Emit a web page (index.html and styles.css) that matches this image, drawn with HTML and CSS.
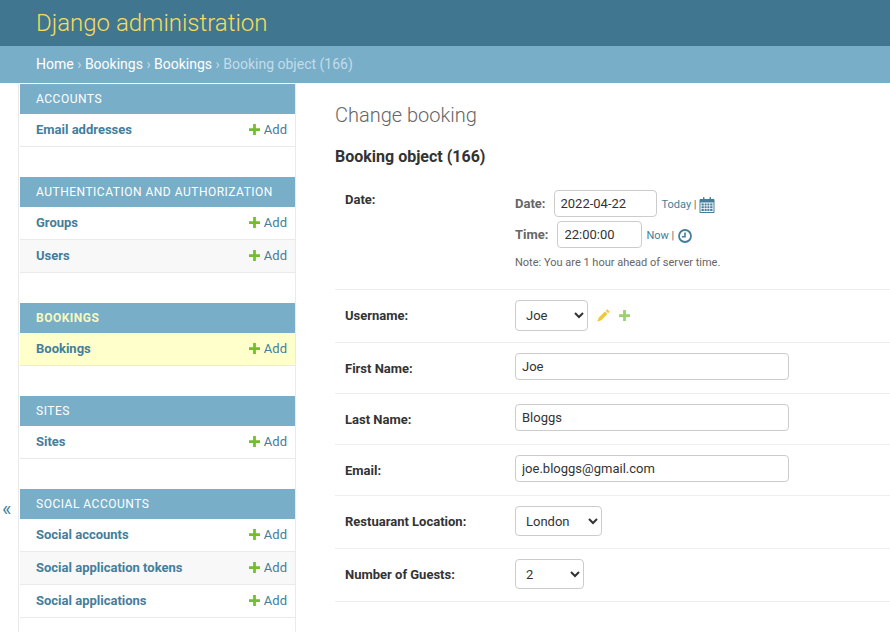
FILE: index.html
```html
<!DOCTYPE html>
<html>
<head>
    <title>Change booking | Django site admin</title>
    <link rel="stylesheet" href="styles.css">
</head>
<body>
    <div id="header"><span id="branding">Django administration</span></div>
    <div class="breadcrumbs">
        <a href="#">Home</a> <span class="sep">›</span> <a href="#">Bookings</a> <span class="sep">›</span> <a href="#">Bookings</a> <span class="sep">›</span> Booking object (166)
    </div>
    <div class="main">
        <div class="toggle">«</div>
        <div class="sidebar">
            <div class="module">
                <div class="caption">Accounts</div>
                <div class="row"><a class="model" href="#">Email addresses</a><a class="add" href="#"><svg class="plus" viewBox="0 0 12 12"><path d="M4.500 0h3v4.500H12v3H7.500V12h-3V7.500H0v-3h4.500z"/></svg>Add</a></div>
            </div>
            <div class="module">
                <div class="caption">Authentication and Authorization</div>
                <div class="row"><a class="model" href="#">Groups</a><a class="add" href="#"><svg class="plus" viewBox="0 0 12 12"><path d="M4.500 0h3v4.500H12v3H7.500V12h-3V7.500H0v-3h4.500z"/></svg>Add</a></div>
                <div class="row alt"><a class="model" href="#">Users</a><a class="add" href="#"><svg class="plus" viewBox="0 0 12 12"><path d="M4.500 0h3v4.500H12v3H7.500V12h-3V7.500H0v-3h4.500z"/></svg>Add</a></div>
            </div>
            <div class="module current">
                <div class="caption">Bookings</div>
                <div class="row"><a class="model" href="#">Bookings</a><a class="add" href="#"><svg class="plus" viewBox="0 0 12 12"><path d="M4.500 0h3v4.500H12v3H7.500V12h-3V7.500H0v-3h4.500z"/></svg>Add</a></div>
            </div>
            <div class="module">
                <div class="caption">Sites</div>
                <div class="row"><a class="model" href="#">Sites</a><a class="add" href="#"><svg class="plus" viewBox="0 0 12 12"><path d="M4.500 0h3v4.500H12v3H7.500V12h-3V7.500H0v-3h4.500z"/></svg>Add</a></div>
            </div>
            <div class="module">
                <div class="caption">Social Accounts</div>
                <div class="row"><a class="model" href="#">Social accounts</a><a class="add" href="#"><svg class="plus" viewBox="0 0 12 12"><path d="M4.500 0h3v4.500H12v3H7.500V12h-3V7.500H0v-3h4.500z"/></svg>Add</a></div>
                <div class="row alt"><a class="model" href="#">Social application tokens</a><a class="add" href="#"><svg class="plus" viewBox="0 0 12 12"><path d="M4.500 0h3v4.500H12v3H7.500V12h-3V7.500H0v-3h4.500z"/></svg>Add</a></div>
                <div class="row"><a class="model" href="#">Social applications</a><a class="add" href="#"><svg class="plus" viewBox="0 0 12 12"><path d="M4.500 0h3v4.500H12v3H7.500V12h-3V7.500H0v-3h4.500z"/></svg>Add</a></div>
            </div>
        </div>
        <div class="content">
            <h1>Change booking</h1>
            <h2>Booking object (166)</h2>

            <div class="form-row date-row">
                <label class="field-label">Date:</label>
                <div class="field">
                    <div class="datetime">
                        <span class="sublabel">Date:</span>
                        <input class="date-input" type="text" value="2022-04-22">
                        <span class="shortcuts"><a href="#">Today</a> | <svg class="cal" viewBox="0 0 16 16"><path fill-rule="evenodd" d="M1.500 2H4V.8C4 .4 4.300 0 4.700 0s.8.4.8.8V2h5V.8c0-.4.3-.8.8-.8s.7.4.7.8V2h2.500c.5 0 1 .5 1 1v12c0 .5-.5 1-1 1h-13c-.5 0-1-.5-1-1V3c0-.5.5-1 1-1zM1.500 5.500v9.500h13V5.500zM2.500 6.500h2.300v2h-2.300zM5.600 6.500h2v2h-2zM8.400 6.500h2v2h-2zM11.200 6.500h2.300v2h-2.300zM2.500 9.300h2.300v2h-2.300zM5.600 9.300h2v2h-2zM8.400 9.300h2v2h-2zM11.200 9.300h2.300v2h-2.300zM2.500 12h2.300v2h-2.300zM5.600 12h2v2h-2zM8.400 12h2v2h-2zM11.200 12h2.300v2h-2.300z"/></svg></span>
                    </div>
                    <div class="datetime">
                        <span class="sublabel time-label">Time:</span>
                        <input class="time-input" type="text" value="22:00:00">
                        <span class="shortcuts time-shortcuts"><a href="#">Now</a> | <svg class="clock" viewBox="0 0 14 14"><circle cx="7" cy="7" r="6" fill="none" stroke-width="1.800"/><path d="M7 3.500V7.800H4" fill="none" stroke-width="1.600"/></svg></span>
                    </div>
                    <div class="timezonewarning">Note: You are 1 hour ahead of server time.</div>
                </div>
            </div>

            <div class="form-row select-row">
                <label class="field-label">Username:</label>
                <div class="field user-field">
                    <select class="user-select"><option>Joe</option></select>
                    <svg class="pencil" viewBox="0 0 13 13"><path d="M10.200.3l2.500 2.500-1.500 1.500-2.500-2.500zM8 2.500l2.500 2.500-6.300 6.300-3.900 1.400 1.400-3.900z"/></svg>
                    <svg class="plus related" viewBox="0 0 12 12"><path d="M4.500 0h3v4.500H12v3H7.500V12h-3V7.500H0v-3h4.500z"/></svg>
                </div>
            </div>
            <div class="form-row text-row">
                <label class="field-label">First Name:</label>
                <div class="field"><input class="wide" type="text" value="Joe"></div>
            </div>
            <div class="form-row text-row">
                <label class="field-label">Last Name:</label>
                <div class="field"><input class="wide" type="text" value="Bloggs"></div>
            </div>
            <div class="form-row text-row">
                <label class="field-label">Email:</label>
                <div class="field"><input class="wide" type="text" value="joe.bloggs@gmail.com"></div>
            </div>
            <div class="form-row select-row">
                <label class="field-label">Restuarant Location:</label>
                <div class="field"><select class="location-select"><option>London</option></select></div>
            </div>
            <div class="form-row select-row">
                <label class="field-label">Number of Guests:</label>
                <div class="field"><select class="guests-select"><option>2</option></select></div>
            </div>
        </div>
    </div>
</body>
</html>
```

FILE: styles.css
```css
html, body {
    height: 632px;
    overflow: hidden;
}
body {
    margin: 0;
    font-family: Roboto, "Liberation Sans", sans-serif;
    font-size: 14px;
    color: #333;
    background: #fff;
}
a {
    text-decoration: none;
}
#header {
    height: 46px;
    box-sizing: border-box;
    padding: 0 36px;
    background: #417690;
    display: flex;
    align-items: center;
}
#branding {
    font-size: 24px;
    font-weight: 300;
    color: #f5dd5d;
}
.breadcrumbs {
    height: 37px;
    line-height: 37px;
    box-sizing: border-box;
    padding: 0 36px;
    background: #79aec8;
    color: #c4dce8;
    font-size: 14px;
}
.breadcrumbs a {
    color: #fff;
}
.sep {
    color: #c4dce8;
}
.main {
    display: flex;
    height: 549px;
}
.toggle {
    width: 19px;
    flex: none;
    box-sizing: border-box;
    padding: 414px 0 0 2px;
    font-size: 20px;
    line-height: 24px;
    color: #447e9b;
    border-right: 1px solid #eaeaea;
}
.sidebar {
    width: 277px;
    flex: none;
    box-sizing: border-box;
    padding: 1px 0 0 1px;
    border-right: 1px solid #eaeaea;
}
.module {
    margin-bottom: 30px;
}
.caption {
    height: 30px;
    line-height: 30px;
    padding: 0 16px;
    background: #79aec8;
    color: #fff;
    font-size: 12px;
    font-weight: 400;
    letter-spacing: .5px;
    text-transform: uppercase;
    white-space: nowrap;
}
.current .caption {
    color: #f5fbc0;
    font-weight: 700;
}
.row {
    height: 33px;
    box-sizing: border-box;
    padding: 0 8px 1px 16px;
    border-bottom: 1px solid #eaeaea;
    display: flex;
    align-items: center;
    justify-content: space-between;
    font-size: 13px;
}
.alt {
    background: #f8f8f8;
}
.current .row {
    background: #ffffcc;
}
.model {
    color: #447e9b;
    font-weight: 700;
}
.add {
    color: #447e9b;
    display: flex;
    align-items: center;
}
.plus {
    width: 11px;
    height: 11px;
    margin-right: 4px;
    fill: #70bf2b;
}
.content {
    flex: 1;
    min-width: 0;
    padding: 0 0 0 39px;
}
h1 {
    margin: 20px 0 0;
    font-size: 20px;
    line-height: 24px;
    font-weight: 300;
    color: #666;
}
h2 {
    margin: 20px 0 0;
    font-size: 16px;
    line-height: 20px;
    font-weight: 700;
    color: #333;
}
.form-row {
    display: flex;
    box-sizing: border-box;
    padding: 0 10px;
    border-bottom: 1px solid #eee;
    font-size: 13px;
}
.field-label {
    width: 170px;
    flex: none;
    font-weight: 700;
    color: #333;
    font-size: 13px;
}
.date-row {
    height: 123px;
    padding-top: 23px;
}
.date-row .field-label {
    line-height: 19px;
}
.select-row {
    height: 53px;
    padding-bottom: 2px;
    align-items: center;
}
.text-row {
    height: 51px;
    padding-bottom: 4px;
    align-items: center;
}
.text-row .field-label {
    margin-top: 4px;
}
.datetime {
    display: flex;
    align-items: center;
    height: 27px;
    margin-bottom: 4px;
}
.sublabel {
    font-weight: 700;
    color: #666;
    margin-right: 8px;
}
.time-label {
    margin-right: 9px;
}
input, select {
    box-sizing: border-box;
    font-family: Roboto, "Liberation Sans", sans-serif;
    font-size: 13px;
    color: #333;
    background: #fff;
    border: 1px solid #ccc;
    border-radius: 4px;
}
input {
    height: 27px;
    padding: 0 6px;
}
.date-input {
    width: 103px;
}
.time-input {
    width: 85px;
}
.wide {
    width: 274px;
    display: block;
}
select {
    height: 30px;
    padding: 0 6px;
}
.user-select {
    width: 73px;
    height: 31px;
}
.location-select {
    width: 87px;
}
.guests-select {
    width: 69px;
}
.shortcuts {
    margin: 2px 0 0 5px;
    font-size: 11px;
    color: #666;
    display: flex;
    align-items: center;
    white-space: pre;
}
.time-shortcuts {
    margin-left: 4px;
}
.shortcuts a {
    color: #447e9b;
}
.cal {
    width: 16px;
    height: 16px;
    fill: #447e9b;
}
.clock {
    width: 14px;
    height: 14px;
    margin-left: 1px;
    stroke: #447e9b;
}
.timezonewarning {
    font-size: 11px;
    color: #666;
    margin-top: 8px;
}
.user-field {
    display: flex;
    align-items: center;
}
.pencil {
    width: 13px;
    height: 13px;
    margin-left: 9px;
    fill: #efb80b;
    opacity: .8;
}
.related {
    margin: 0 0 0 9px;
    opacity: .7;
}
```
